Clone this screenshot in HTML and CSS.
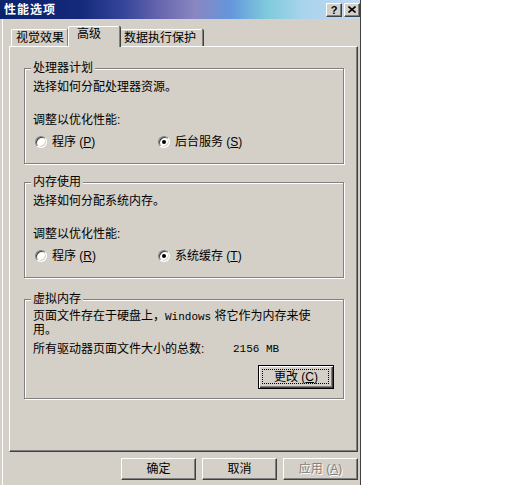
FILE: index.html
```html
<!DOCTYPE html>
<html lang="zh-CN">

<head>
    <meta charset="UTF-8">
    <meta name="viewport" content="width=device-width, initial-scale=1.0">
    <title>性能选项</title>
    <link rel="stylesheet" href="styles.css">
</head>

<body>
    <div class="window">
        <!-- TITLE BAR -->
        <div class="titlebar">
            <span class="title">性能选项</span>
            <span class="tb-btn">?</span>
            <span class="tb-btn">
                <svg width="8" height="7" viewBox="0 0 8 7">
                    <path d="M0.5 0.5 L7.5 6.5 M7.5 0.5 L0.5 6.5" stroke="#000" stroke-width="1.6" />
                </svg>
            </span>
        </div>

        <div class="content">
            <!-- TABS -->
            <div class="tabs">
                <div class="tab tab-visual">视觉效果</div>
                <div class="tab tab-active">高级</div>
                <div class="tab tab-dep">数据执行保护</div>
            </div>

            <div class="panel">
                <!-- CPU -->
                <div class="group">
                    <div class="group-title">处理器计划</div>
                    <p class="group-line">选择如何分配处理器资源。</p>
                    <p class="group-prompt">调整以优化性能:</p>
                    <div class="radio-row">
                        <label class="option"><span class="radio"></span><span>程序 <span class="key">(<u>P</u>)</span></span></label>
                        <label class="option"><span class="radio checked"></span><span>后台服务 <span class="key">(<u>S</u>)</span></span></label>
                    </div>
                </div>

                <!-- MEMORY -->
                <div class="group group-mem">
                    <div class="group-title">内存使用</div>
                    <p class="group-line">选择如何分配系统内存。</p>
                    <p class="group-prompt">调整以优化性能:</p>
                    <div class="radio-row">
                        <label class="option"><span class="radio"></span><span>程序 <span class="key">(<u>R</u>)</span></span></label>
                        <label class="option"><span class="radio checked"></span><span>系统缓存 <span class="key">(<u>T</u>)</span></span></label>
                    </div>
                </div>

                <!-- VIRTUAL MEMORY -->
                <div class="group group-vm">
                    <div class="group-title">虚拟内存</div>
                    <p class="vm-desc">页面文件存在于硬盘上，<span class="latin">Windows</span> 将它作为内存来使<br>用。</p>
                    <div class="vm-total">
                        <span class="vm-label">所有驱动器页面文件大小的总数:</span>
                        <span class="latin">2156 MB</span>
                    </div>
                    <div class="vm-actions">
                        <button class="btn btn-default"><span>更改 <span class="key">(<u>C</u>)</span></span></button>
                    </div>
                </div>
            </div>

            <!-- DIALOG BUTTONS -->
            <div class="actions">
                <button class="btn">确定</button>
                <button class="btn">取消</button>
                <button class="btn btn-disabled"><span>应用 <span class="key">(<u>A</u>)</span></span></button>
            </div>
        </div>
    </div>
</body>

</html>
```

FILE: styles.css
```css
* {
    margin: 0;
    padding: 0;
    box-sizing: border-box;
}

body {
    background-color: #fff;
    font-family: 'Liberation Sans', 'Noto Sans CJK SC', sans-serif;
    font-size: 12px;
    line-height: 12px;
    color: #000;
    text-autospace: no-autospace;
}

.window {
    width: 361px;
    height: 485px;
    background-color: #d4d0c8;
    border-right: 1px solid #404040;
    box-shadow: inset 2px 0 #d4d0c8, inset 3px 0 #fff;
}

.titlebar {
    height: 19px;
    display: flex;
    align-items: center;
    padding: 0 0 0 4px;
    background-image: linear-gradient(90deg, #0a236c 0%, #14297a 22%, #34449a 34%, #6a68ae 45%, #8a86c2 54%, #6496dc 64%, #7ecadc 74%, #a8d4ec 84%, #c2d8f4 100%);
}

.title {
    flex: 1;
    color: #fff;
    font-weight: bold;
    letter-spacing: 1px;
}

.tb-btn {
    width: 16px;
    height: 14px;
    display: flex;
    align-items: center;
    justify-content: center;
    background-color: #d4d0c8;
    border: 1px solid;
    border-color: #fff #404040 #404040 #fff;
    box-shadow: inset -1px -1px #808080;
    font: bold 11px 'Liberation Sans', sans-serif;
}

.tb-btn + .tb-btn {
    margin-left: 2px;
}

.content {
    padding: 0 2px 0 9px;
}

/* tabs */
.tabs {
    display: flex;
    align-items: flex-end;
    padding: 7px 0 0 2px;
}

.tab {
    height: 17px;
    padding: 2px 0 0 4px;
    background-color: #d4d0c8;
    border-top: 1px solid #fff;
    border-left: 1px solid #fff;
    border-right: 1px solid #808080;
    border-radius: 2px 2px 0 0;
    box-shadow: 1px 0 #404040;
}

.tab-visual {
    width: 57px;
}

.tab-active {
    width: 52px;
    height: 21px;
    margin-bottom: -1px;
    padding: 1px 0 0 8px;
    position: relative;
    z-index: 1;
}

.tab-dep {
    width: 83px;
    padding-left: 3px;
}

.panel {
    height: 406px;
    padding: 21px 0 0 14px;
    border-top: 1px solid #fff;
    border-left: 1px solid #fff;
    border-right: 1px solid #404040;
    border-bottom: 1px solid #404040;
    box-shadow: inset -1px -1px #808080;
}

/* group boxes */
.group {
    width: 320px;
    padding: 0 8px 15px;
    border: 1px solid #808080;
    box-shadow: 1px 1px #fff, inset 1px 1px #fff;
}

.group-mem {
    margin-top: 18px;
}

.group-vm {
    margin-top: 21px;
    padding-bottom: 9px;
}

.group-title {
    width: fit-content;
    margin: -7px 0 0 -2px;
    padding: 0 2px;
    background-color: #d4d0c8;
}

.group-line {
    margin-top: 7px;
}

.group-prompt {
    margin-top: 21px;
}

.radio-row {
    display: flex;
    align-items: center;
    height: 13px;
    margin-top: 9px;
    padding-left: 2px;
}

.option {
    display: flex;
    align-items: center;
    gap: 5px;
    white-space: nowrap;
}

.option:first-child {
    width: 123px;
}

.key {
    font-family: 'Liberation Sans', sans-serif;
}

.radio {
    width: 12px;
    height: 12px;
    display: flex;
    align-items: center;
    justify-content: center;
    border-radius: 50%;
    background-color: #fff;
    border: 1px solid;
    border-color: #808080 #fff #fff #808080;
    box-shadow: inset 1px 1px #404040, inset -1px -1px #d4d0c8;
}

.radio.checked::after {
    content: '';
    width: 4px;
    height: 4px;
    border-radius: 50%;
    background-color: #000;
}

.latin {
    font-family: 'Liberation Mono', monospace;
    font-size: 11px;
}

.vm-desc {
    margin-top: 5px;
    line-height: 13px;
}

.vm-total {
    display: flex;
    margin-top: 6px;
}

.vm-label {
    width: 200px;
}

.vm-actions {
    display: flex;
    justify-content: flex-end;
    margin-top: 10px;
    padding-right: 1px;
}

/* buttons */
.btn {
    width: 75px;
    height: 22px;
    display: flex;
    align-items: center;
    justify-content: center;
    white-space: nowrap;
    background-color: #d4d0c8;
    font-family: 'Liberation Sans', 'Noto Sans CJK SC', sans-serif;
    font-size: 12px;
    line-height: 12px;
    color: #000;
    border: 1px solid;
    border-color: #fff #404040 #404040 #fff;
    box-shadow: inset -1px -1px #808080;
}

.btn-default {
    width: 76px;
    height: 24px;
    position: relative;
    border-color: #000;
    box-shadow: inset 1px 1px #fff, inset -1px -1px #404040, inset -2px -2px #808080;
}

.btn-default::after {
    content: '';
    position: absolute;
    inset: 3px 4px 4px 3px;
    border: 1px dotted #000;
}

.btn-disabled {
    color: #808080;
    text-shadow: 1px 1px #fff;
}

.actions {
    display: flex;
    justify-content: flex-end;
    gap: 6px;
    margin-top: 6px;
}
```
